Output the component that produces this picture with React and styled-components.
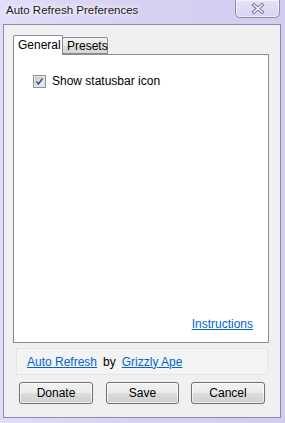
import React from "react";
import styled, { createGlobalStyle } from "styled-components";

const GlobalStyle = createGlobalStyle`
  html, body {
    margin: 0;
    padding: 0;
    background: #d8d1f2;
  }
`;

const Window = styled.div`
  width: 285px;
  height: 423px;
  display: flex;
  flex-direction: column;
  background: linear-gradient(90deg, #e2ddf8 0%, #d8d1f2 45%, #d3ccef 100%);
  font-family: "Liberation Sans", Arial, sans-serif;
  font-size: 12px;
  color: #000;
  overflow: hidden;
`;

const TitleBar = styled.div`
  height: 24px;
  display: flex;
  align-items: flex-start;
  justify-content: space-between;
  flex-shrink: 0;
`;

const Title = styled.div`
  padding: 4px 0 0 6px;
  font-size: 11.5px;
  color: #1a1a1a;
  text-shadow: 0 0 8px #ffffff, 0 0 4px #ffffff;
`;

const CloseButton = styled.div`
  width: 43px;
  height: 17px;
  margin-right: 5px;
  border: 1px solid #8f8aa8;
  border-top: none;
  border-radius: 0 0 5px 5px;
  background: linear-gradient(#e6e2f9, #d8d2f2);
  box-shadow: inset 0 0 0 1px rgba(255, 255, 255, 0.55);
  display: flex;
  align-items: center;
  justify-content: center;
`;

const Client = styled.div`
  flex: 1;
  margin: 0 4px 5px 3px;
  border: 1px solid #8d89a6;
  background: #f0f0f0;
  display: flex;
  flex-direction: column;
`;

const TabStrip = styled.div`
  display: flex;
  align-items: flex-end;
  padding: 10px 0 0 9px;
  height: 19px;
  position: relative;
  z-index: 1;
`;

const Tab = styled.div`
  box-sizing: border-box;
  width: ${(p) => p.$w}px;
  height: ${(p) => (p.$active ? 20 : 17)}px;
  margin-left: ${(p) => (p.$first ? 0 : -1)}px;
  margin-bottom: ${(p) => (p.$active ? -1 : 0)}px;
  border: 1px solid #898c95;
  border-bottom: ${(p) => (p.$active ? "none" : "1px solid #898c95")};
  border-radius: 2px 2px 0 0;
  background: ${(p) =>
    p.$active ? "#ffffff" : "linear-gradient(#f2f2f2 0%, #ebebeb 50%, #dcdcdc 51%, #d8d8d8 100%)"};
  padding: ${(p) => (p.$active ? "2px 0 0 4px" : "1px 0 0 4px")};
  font-size: 12px;
  line-height: 14px;
  ${(p) => (p.$active ? "z-index: 2;" : "")}
`;

const Panel = styled.div`
  box-sizing: border-box;
  width: 256px;
  height: 289px;
  margin-left: 9px;
  border: 1px solid #898c95;
  background: #ffffff;
  display: flex;
  flex-direction: column;
  justify-content: space-between;
  padding: 20px 14px 11px 19px;
`;

const CheckRow = styled.label`
  display: flex;
  align-items: center;
  gap: 6px;
  line-height: 13px;
`;

const LinkText = styled.span`
  color: #0066cc;
  text-decoration: underline;
  cursor: pointer;
`;

const RightLink = styled(LinkText)`
  align-self: flex-end;
  margin-right: 1px;
`;

const Credits = styled.div`
  box-sizing: border-box;
  height: 27px;
  margin: 5px 12px 0 12px;
  border: 1px solid #e6e6e6;
  background: #f3f3f3;
  display: flex;
  align-items: center;
  padding-left: 10px;
  gap: 6px;
`;

const ButtonRow = styled.div`
  display: flex;
  margin: 7px 0 0 15px;
`;

const Button = styled.div`
  box-sizing: border-box;
  width: ${(p) => p.$w}px;
  height: 22px;
  margin-right: ${(p) => p.$gap || 0}px;
  border: 1px solid #707070;
  border-radius: 3px;
  background: linear-gradient(#f2f2f2 0%, #ebebeb 50%, #dddddd 51%, #cfcfcf 100%);
  box-shadow: inset 0 0 0 1px rgba(255, 255, 255, 0.7);
  display: flex;
  align-items: center;
  justify-content: center;
  font-size: 12px;
`;

const CloseIcon = () => (
  <svg width="14" height="11" viewBox="0 0 14 11">
    <path d="M3 2 L11 9 M11 2 L3 9" stroke="#7a7790" strokeWidth="3.6" strokeLinecap="square" />
    <path d="M3 2 L11 9 M11 2 L3 9" stroke="#f4f2fc" strokeWidth="1.6" strokeLinecap="square" />
  </svg>
);

const CheckBox = () => (
  <svg width="13" height="13" viewBox="0 0 13 13">
    <defs>
      <linearGradient id="cbg" x1="0" y1="0" x2="1" y2="1">
        <stop offset="0" stopColor="#cbcfd5" />
        <stop offset="1" stopColor="#f6f6f6" />
      </linearGradient>
    </defs>
    <rect x="0.5" y="0.5" width="12" height="12" fill="#ffffff" stroke="#8e8f8f" />
    <rect x="2" y="2" width="9" height="9" fill="url(#cbg)" stroke="#b0b4bc" strokeWidth="0.6" />
    <path d="M3.5 6.5 L5.5 9 L9.5 3.5" fill="none" stroke="#3b5586" strokeWidth="1.6" />
  </svg>
);

export default function App() {
  return (
    <>
      <GlobalStyle />
      <Window>
        <TitleBar>
          <Title>Auto Refresh Preferences</Title>
          <CloseButton>
            <CloseIcon />
          </CloseButton>
        </TitleBar>
        <Client>
          <TabStrip>
            <Tab $active $first $w={50}>General</Tab>
            <Tab $w={46}>Presets</Tab>
          </TabStrip>
          <Panel>
            <CheckRow>
              <CheckBox />
              Show statusbar icon
            </CheckRow>
            <RightLink>Instructions</RightLink>
          </Panel>
          <Credits>
            <LinkText>Auto Refresh</LinkText>
            <span>by</span>
            <LinkText>Grizzly Ape</LinkText>
          </Credits>
          <ButtonRow>
            <Button $w={74} $gap={13}>Donate</Button>
            <Button $w={73} $gap={12}>Save</Button>
            <Button $w={74}>Cancel</Button>
          </ButtonRow>
        </Client>
      </Window>
    </>
  );
}
